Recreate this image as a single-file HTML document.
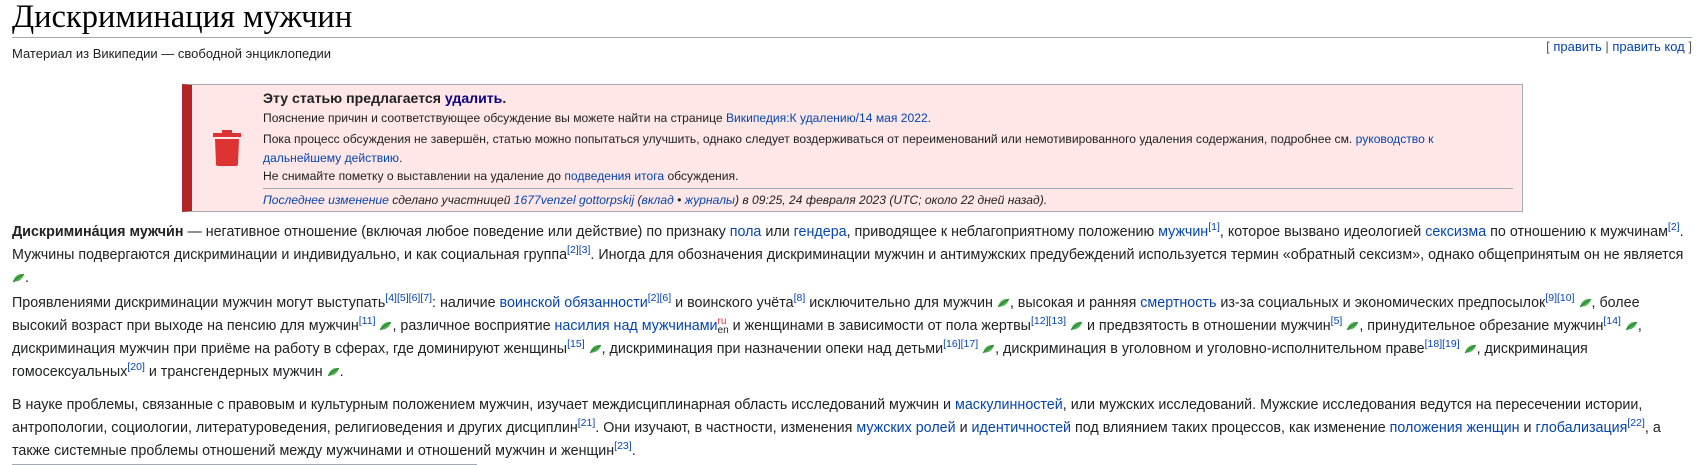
<!DOCTYPE html>
<html><head><meta charset="utf-8">
<style>
body{margin:0;background:#fff;font-family:"Liberation Sans",Arial,sans-serif;color:#202122;width:1708px;height:465px;overflow:hidden;position:relative}
a{color:#0645ad;text-decoration:none}
h1{position:absolute;left:12px;top:-2px;margin:0;font-family:"Liberation Serif",serif;font-weight:normal;font-size:32.5px;line-height:38px;color:#000}
.hr{position:absolute;left:12px;top:37px;width:1680px;height:1px;background:#a2a9b1}
.sub{position:absolute;left:12px;top:46px;font-size:13px;line-height:16px}
.edit{position:absolute;right:16px;top:39px;font-size:13px;line-height:16px;color:#54595d}
.box{position:absolute;left:182px;top:84px;width:1330px;height:126px;background:#fee7e6;border:1px solid #a2a9b1;border-left:10px solid #b32424;font-size:12.1px;line-height:20px}
.box .t{position:absolute;left:71px;white-space:nowrap}
.box .sep{position:absolute;left:71px;top:103px;width:1250px;height:1px;background:#a2a9b1}
.box .last{position:absolute;top:105px;left:71px;font-style:italic;white-space:nowrap}
.p{position:absolute;left:12px;font-size:14.3px;line-height:23px;white-space:nowrap}
sup{font-size:10.5px;line-height:0;vertical-align:super}
.lf{display:inline-block;width:13px;height:11px;vertical-align:-1px}
</style></head><body>
<h1>Дискриминация мужчин</h1>
<div class="hr"></div>
<div class="sub">Материал из Википедии — свободной энциклопедии</div>
<div class="edit">[ <a>править</a> | <a>править код</a> ]</div>
<div class="box">
<svg style="position:absolute;left:21px;top:45px" width="28" height="36" viewBox="0 0 28 36"><rect x="0" y="3" width="28" height="4" fill="#dd3333"/><rect x="9" y="0" width="10" height="3" fill="#dd3333"/><path d="M2 9h24l-1 25a2 2 0 0 1-2 2H5a2 2 0 0 1-2-2z" fill="#dd3333"/></svg>
<div class="t" style="top:3px;font-size:14.1px;line-height:20px;font-weight:bold">Эту статью предлагается <a style="color:#0b0080">удалить</a>.</div>
<div class="t" style="top:23px">Пояснение причин и соответствующее обсуждение вы можете найти на странице <a>Википедия:К удалению/14 мая 2022</a>.</div>
<div class="t" style="top:44px">Пока процесс обсуждения не завершён, статью можно попытаться улучшить, однако следует воздерживаться от переименований или немотивированного удаления содержания, подробнее см. <a>руководство к</a></div>
<div class="t" style="top:63px"><a>дальнейшему действию</a>.</div>
<div class="t" style="top:81px">Не снимайте пометку о выставлении на удаление до <a>подведения итога</a> обсуждения.</div>
<div class="sep"></div>
<div class="last"><a>Последнее изменение</a> сделано участницей <a>1677venzel gottorpskij</a> (<a>вклад</a> • <a>журналы</a>) в 09:25, 24 февраля 2023 (UTC; около 22 дней назад).</div>
</div>
<svg width="0" height="0" style="position:absolute"><defs><symbol id="l" viewBox="0 0 12 10"><path d="M1 9C2 4 6 1 11 2 10 6 7 9 1 9z" fill="#4caf50"/><path d="M1 9C4 6 7 4 11 2" stroke="#2e7d32" fill="none"/></symbol></defs></svg>
<div class="p" style="top:221px"><b>Дискримина́ция мужчи́н</b> — негативное отношение (включая любое поведение или действие) по признаку <a>пола</a> или <a>гендера</a>, приводящее к неблагоприятному положению <a>мужчин</a><sup><a>[1]</a></sup>, которое вызвано идеологией <a>сексизма</a> по отношению к мужчинам<sup><a>[2]</a></sup>.<br>Мужчины подвергаются дискриминации и индивидуально, и как социальная группа<sup><a>[2]</a><a>[3]</a></sup>. Иногда для обозначения дискриминации мужчин и антимужских предубеждений используется термин «обратный сексизм», однако общепринятым он не является<br><svg class="lf"><use href="#l"/></svg>.</div>
<div class="p" style="top:292px">Проявлениями дискриминации мужчин могут выступать<sup><a>[4]</a><a>[5]</a><a>[6]</a><a>[7]</a></sup>: наличие <a>воинской обязанности</a><sup><a>[2]</a><a>[6]</a></sup> и воинского учёта<sup><a>[8]</a></sup> исключительно для мужчин <svg class="lf"><use href="#l"/></svg>, высокая и ранняя <a>смертность</a> из-за социальных и экономических предпосылок<sup><a>[9]</a><a>[10]</a></sup> <svg class="lf"><use href="#l"/></svg>, более<br>высокий возраст при выходе на пенсию для мужчин<sup><a>[11]</a></sup> <svg class="lf"><use href="#l"/></svg>, различное восприятие <a>насилия над мужчинами</a><span style="display:inline-block;font-size:10px;line-height:9px;vertical-align:-3px"><span style="color:#d33">ru</span><br>en</span> и женщинами в зависимости от пола жертвы<sup><a>[12]</a><a>[13]</a></sup> <svg class="lf"><use href="#l"/></svg> и предвзятость в отношении мужчин<sup><a>[5]</a></sup> <svg class="lf"><use href="#l"/></svg>, принудительное обрезание мужчин<sup><a>[14]</a></sup> <svg class="lf"><use href="#l"/></svg>,<br>дискриминация мужчин при приёме на работу в сферах, где доминируют женщины<sup><a>[15]</a></sup> <svg class="lf"><use href="#l"/></svg>, дискриминация при назначении опеки над детьми<sup><a>[16]</a><a>[17]</a></sup> <svg class="lf"><use href="#l"/></svg>, дискриминация в уголовном и уголовно-исполнительном праве<sup><a>[18]</a><a>[19]</a></sup> <svg class="lf"><use href="#l"/></svg>, дискриминация<br>гомосексуальных<sup><a>[20]</a></sup> и трансгендерных мужчин <svg class="lf"><use href="#l"/></svg>.</div>
<div class="p" style="top:394px">В науке проблемы, связанные с правовым и культурным положением мужчин, изучает междисциплинарная область исследований мужчин и <a>маскулинностей</a>, или мужских исследований. Мужские исследования ведутся на пересечении истории,<br>антропологии, социологии, литературоведения, религиоведения и других дисциплин<sup><a>[21]</a></sup>. Они изучают, в частности, изменения <a>мужских ролей</a> и <a>идентичностей</a> под влиянием таких процессов, как изменение <a>положения женщин</a> и <a>глобализация</a><sup><a>[22]</a></sup>, а<br>также системные проблемы отношений между мужчинами и отношений мужчин и женщин<sup><a>[23]</a></sup>.</div>
<div style="position:absolute;left:12px;top:464px;width:465px;height:1px;background:#a2a9b1"></div>
</body></html>
